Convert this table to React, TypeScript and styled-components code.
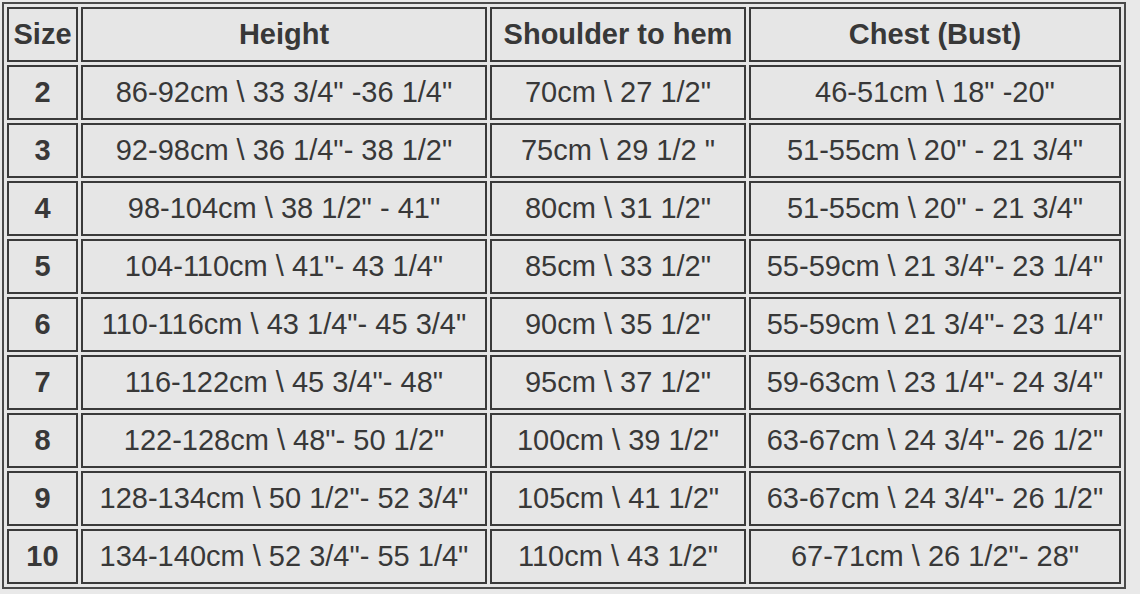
import React from "react";
import styled, { createGlobalStyle } from "styled-components";

const GlobalStyle = createGlobalStyle`
  html, body {
    margin: 0;
    padding: 0;
    background: #e9e9e9;
  }
  body {
    font-family: "Liberation Sans", Arial, sans-serif;
  }
`;

const Page = styled.div`
  padding: 2px;
`;

const Table = styled.table`
  border: 2px solid #4a4a4a;
  border-collapse: separate;
  border-spacing: 3px;
  background: #e6e6e6;
  table-layout: fixed;
  width: 1124px;
`;

const Cell = styled.td<{ $bold?: boolean }>`
  border: 2px solid #3a3a3a;
  height: 55px;
  padding: 0 1px;
  box-sizing: border-box;
  text-align: center;
  vertical-align: middle;
  font-family: "Liberation Sans", Arial, sans-serif;
  font-size: 29px;
  font-weight: ${(p) => (p.$bold ? 700 : 400)};
  color: #383838;
  white-space: nowrap;
  overflow: hidden;
  background: #e6e6e6;
`;

const HeadCell = styled(Cell).attrs({ as: "th" })``;

const widths = [71, 406, 256, 372];

const headers = ["Size", "Height", "Shoulder to hem", "Chest (Bust)"];

const rows: [string, string, string, string][] = [
  ["2", "86-92cm \\ 33 3/4\" -36 1/4\"", "70cm \\ 27 1/2\"", "46-51cm \\ 18\" -20\""],
  ["3", "92-98cm \\ 36 1/4\"- 38 1/2\"", "75cm \\ 29 1/2 \"", "51-55cm \\ 20\" - 21 3/4\""],
  ["4", "98-104cm \\ 38 1/2\" - 41\"", "80cm \\ 31 1/2\"", "51-55cm \\ 20\" - 21 3/4\""],
  ["5", "104-110cm \\ 41\"- 43 1/4\"", "85cm \\ 33 1/2\"", "55-59cm \\ 21 3/4\"- 23 1/4\""],
  ["6", "110-116cm \\ 43 1/4\"- 45 3/4\"", "90cm \\ 35 1/2\"", "55-59cm \\ 21 3/4\"- 23 1/4\""],
  ["7", "116-122cm \\ 45 3/4\"- 48\"", "95cm \\ 37 1/2\"", "59-63cm \\ 23 1/4\"- 24 3/4\""],
  ["8", "122-128cm \\ 48\"- 50 1/2\"", "100cm \\ 39 1/2\"", "63-67cm \\ 24 3/4\"- 26 1/2\""],
  ["9", "128-134cm \\ 50 1/2\"- 52 3/4\"", "105cm \\ 41 1/2\"", "63-67cm \\ 24 3/4\"- 26 1/2\""],
  ["10", "134-140cm \\ 52 3/4\"- 55 1/4\"", "110cm \\ 43 1/2\"", "67-71cm \\ 26 1/2\"- 28\""],
];

export default function App() {
  return (
    <>
      <GlobalStyle />
      <Page>
        <Table>
          <colgroup>
            {widths.map((w, i) => (
              <col key={i} style={{ width: w }} />
            ))}
          </colgroup>
          <thead>
            <tr>
              {headers.map((h) => (
                <HeadCell key={h} $bold>
                  {h}
                </HeadCell>
              ))}
            </tr>
          </thead>
          <tbody>
            {rows.map((r) => (
              <tr key={r[0]}>
                <Cell $bold>{r[0]}</Cell>
                <Cell>{r[1]}</Cell>
                <Cell>{r[2]}</Cell>
                <Cell>{r[3]}</Cell>
              </tr>
            ))}
          </tbody>
        </Table>
      </Page>
    </>
  );
}
